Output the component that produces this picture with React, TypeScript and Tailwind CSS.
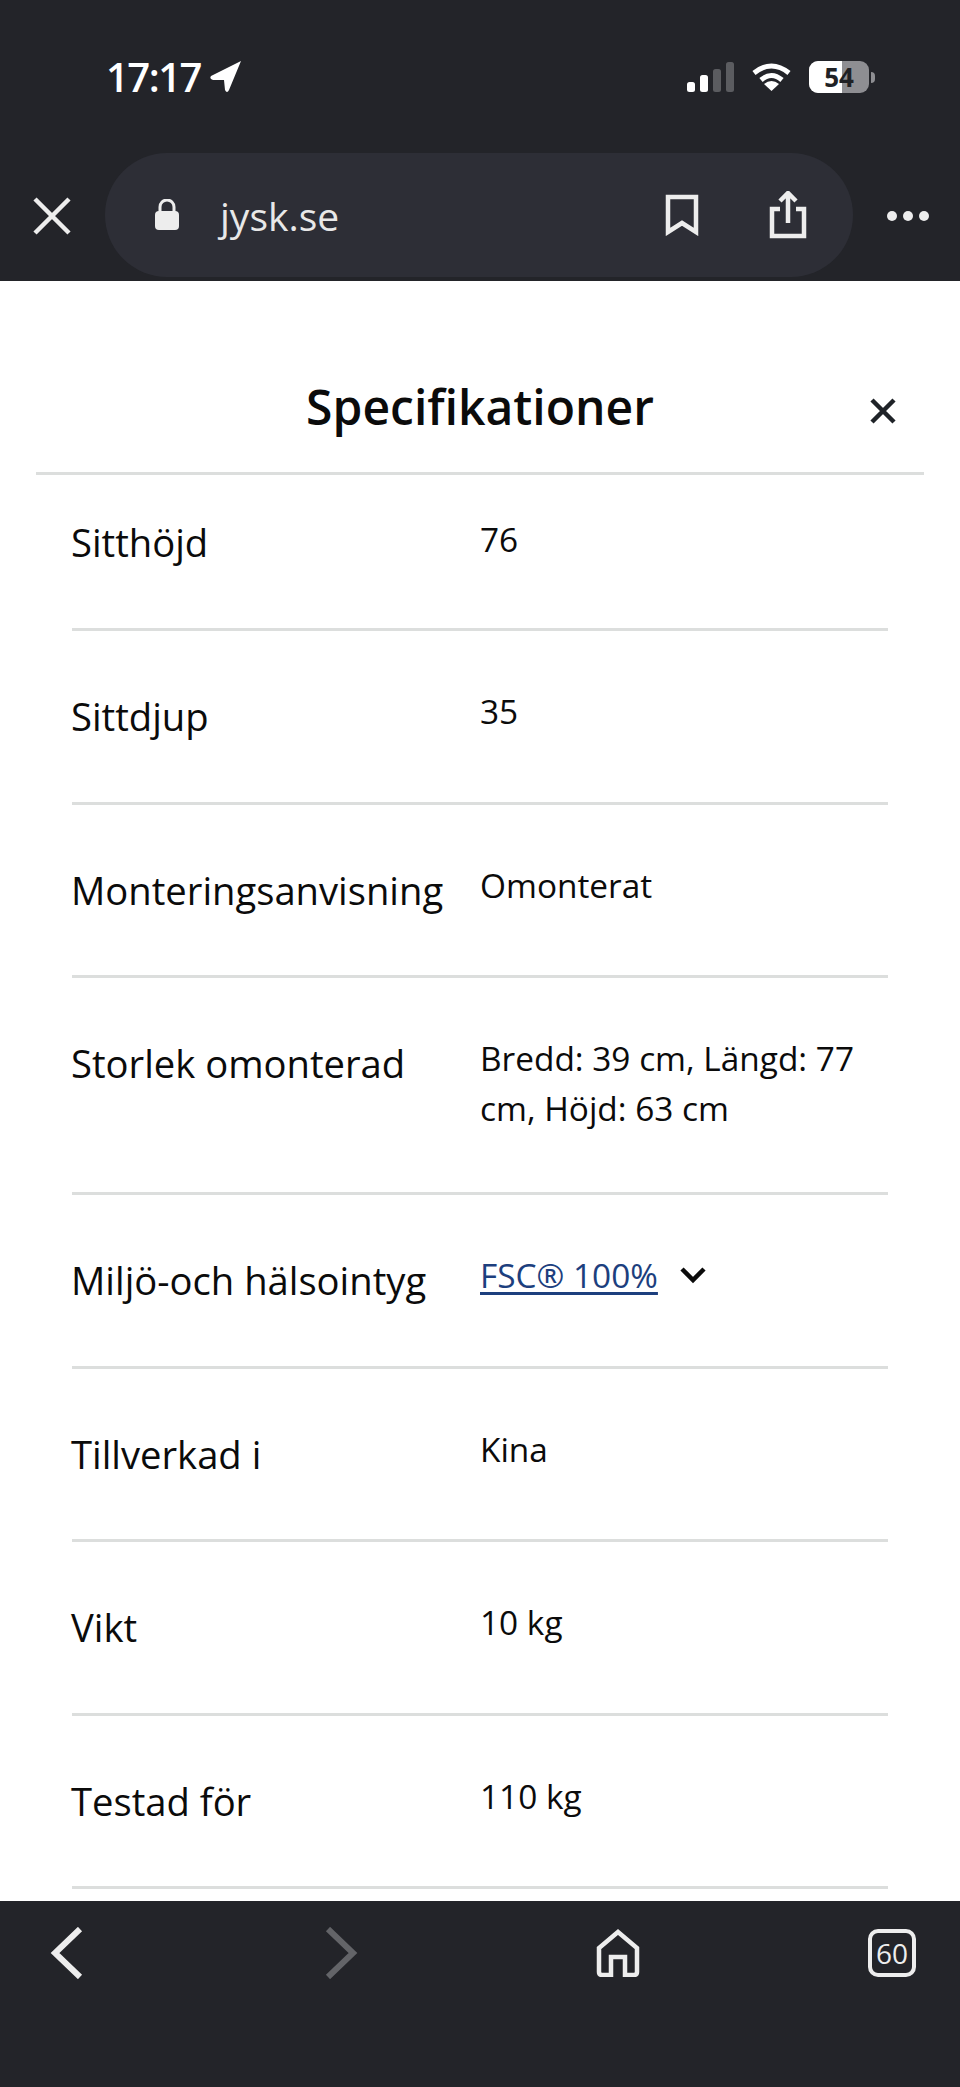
const specs = [
  { label: "Sittdjup", value: "35" },
  { label: "Monteringsanvisning", value: "Omonterat" },
];
const specsAfter = [
  { label: "Tillverkad i", value: "Kina" },
  { label: "Vikt", value: "10 kg" },
  { label: "Testad för", value: "110 kg" },
];

function Row({
  label,
  children,
  className = "h-[173.5px]",
  labelPad = "pt-[61px]",
  valuePad = "pt-[55px]",
}: {
  label: string;
  children: React.ReactNode;
  className?: string;
  labelPad?: string;
  valuePad?: string;
}) {
  return (
    <div className={`flex border-b-[3px] border-[#dcdedd] ${className}`}>
      <div className={`-ml-[1px] w-[409px] shrink-0 text-[38.2px] leading-[48px] text-[#0b0b0b] ${labelPad}`}>{label}</div>
      <div className={`text-[33.4px] leading-[50px] text-[#0b0b0b] ${valuePad}`}>{children}</div>
    </div>
  );
}

function StatusBar() {
  return (
    <div className="flex h-[153px] items-start justify-between pl-[106px] pr-[85px] pt-[53px]">
      <div className="flex items-center gap-[9px]">
        <span className="text-[40px] font-semibold leading-[48px] tracking-[-1.5px] text-white">17:17</span>
        <svg width="32" height="32" viewBox="0 0 32 32" fill="white">
          <path d="M31 0 L1 15 Q-1 18 3 19 L14 19 L15 29 Q17 33 19 29 Z" />
        </svg>
      </div>
      <div className="flex items-center gap-[18px] pt-[8px]">
        <svg width="47" height="30" viewBox="0 0 47 30">
          <rect x="0" y="20" width="8" height="10" rx="2.5" fill="white" />
          <rect x="13" y="13" width="8" height="17" rx="2.5" fill="white" />
          <rect x="26" y="7" width="8" height="23" rx="2.5" fill="#5b5c60" />
          <rect x="39" y="0" width="8" height="30" rx="2.5" fill="#5b5c60" />
        </svg>
        <svg width="39" height="28" viewBox="0 0 39 28" fill="none" stroke="white" strokeWidth="5">
          <path d="M2 10 Q19.5 -4 37 10" />
          <path d="M9 17 Q19.5 8 30 17" />
          <path d="M19.5 28 L12 21 Q19.5 15 27 21 Z" fill="white" stroke="none" />
        </svg>
        <div className="flex items-center">
          <div className="relative flex h-[32px] w-[60px] items-center justify-center rounded-[9px] bg-[#8e8e92]">
            <div className="absolute inset-y-0 left-0 w-[33px] rounded-l-[9px] bg-white" />
            <span className="relative text-[26px] font-bold leading-[32px] text-[#202125]">54</span>
          </div>
          <div className="ml-[2px] h-[11px] w-[4px] rounded-r-full bg-[#8e8e92]" />
        </div>
      </div>
    </div>
  );
}

function UrlBar() {
  return (
    <div className="flex items-start pl-[33px]">
      <svg className="mt-[44px]" width="38" height="38" viewBox="0 0 38 38" stroke="#ededed" strokeWidth="4.5" fill="none">
        <path d="M2 2 L36 36 M36 2 L2 36" />
      </svg>
      <div className="ml-[34px] flex h-[124px] w-[748px] items-center rounded-[62px] bg-[#2d2e36] pl-[49px] pr-[46px]">
        <svg width="26" height="32" viewBox="0 0 26 32" fill="#ededed">
          <path d="M6 13 V8 a7 7 0 0 1 14 0 V13" fill="none" stroke="#ededed" strokeWidth="3" />
          <rect x="1" y="12" width="24" height="19" rx="4" />
        </svg>
        <span className="ml-[40px] text-[39px] leading-none text-[#e8e8e8]">jysk.se</span>
        <svg className="ml-auto" width="34" height="42" viewBox="0 0 34 42" fill="none" stroke="#ededed" strokeWidth="4.5">
          <path d="M3 3 H31 V38 L17 29 L3 38 Z" />
        </svg>
        <svg className="ml-[70px]" width="38" height="48" viewBox="0 0 38 48" fill="none" stroke="#ededed" strokeWidth="4.5">
          <path d="M11 18 H3 V45 H35 V18 H27" />
          <path d="M19 32 V4 M11 10 L19 2 L27 10" />
        </svg>
      </div>
      <div className="ml-[34px] mt-[58px] flex gap-[6px]">
        <div className="size-[10px] rounded-full bg-[#ededed]" />
        <div className="size-[10px] rounded-full bg-[#ededed]" />
        <div className="size-[10px] rounded-full bg-[#ededed]" />
      </div>
    </div>
  );
}

function BottomBar() {
  return (
    <div className="flex h-[186px] items-start bg-[#232429] pl-[50px] pt-[26px]">
      <svg width="34" height="52" viewBox="0 0 34 52" fill="none" stroke="#ededed" strokeWidth="6">
        <path d="M30 2 L5 26 L30 50" />
      </svg>
      <svg className="ml-[240px]" width="34" height="52" viewBox="0 0 34 52" fill="none" stroke="#636468" strokeWidth="6">
        <path d="M4 2 L29 26 L4 50" />
      </svg>
      <svg className="ml-[238px] mt-[2px]" width="44" height="48" viewBox="0 0 44 48" fill="none" stroke="#ededed" strokeWidth="4.5">
        <path d="M22 3 L41 19 V43 Q41 46 38 46 H29 V28 H15 V46 H6 Q3 46 3 43 V19 Z" />
      </svg>
      <div className="ml-[228px] mt-[2px] flex h-[48px] w-[48px] items-center justify-center rounded-[10px] border-[4px] border-[#ededed] text-[28px] leading-none text-[#ededed]">
        60
      </div>
    </div>
  );
}

export default function App() {
  return (
    <div className="flex h-[2087px] w-[960px] flex-col overflow-hidden bg-white font-['Open_Sans',sans-serif]">
      {/* Browser chrome */}
      <div className="h-[281px] shrink-0 bg-[#232429]">
        <StatusBar />
        <UrlBar />
      </div>

      {/* Modal */}
      <div className="flex min-h-0 flex-1 flex-col">
        <div className="relative mx-[36px] flex h-[194px] shrink-0 items-end justify-center border-b-[3px] border-[#dcdedd] pb-[34px]">
          <h1 className="text-[48px] font-semibold leading-[62px] text-[#0b0b0b]">Specifikationer</h1>
          <svg className="absolute right-[27px] top-[116px]" width="28" height="28" viewBox="0 0 28 28" fill="none" stroke="#1f2328" strokeWidth="4.5">
            <path d="M3 3 L25 25 M25 3 L3 25" />
          </svg>
        </div>
        <div className="mx-[72px] flex-1">
          <Row label="Sitthöjd" className="h-[156px]" labelPad="pt-[43px]" valuePad="pt-[39px]">76</Row>
          {specs.map((s) => (
            <Row key={s.label} label={s.label}>{s.value}</Row>
          ))}
          <Row label="Storlek omonterad" className="h-[217px]">
            Bredd: 39 cm, Längd: 77 cm, Höjd: 63 cm
          </Row>
          <Row label="Miljö-och hälsointyg">
            <span className="flex items-center gap-[22px]">
              <span className="text-[#1d3f7e] underline underline-offset-[4px]">FSC® 100%</span>
              <svg width="26" height="18" viewBox="0 0 26 18" fill="none" stroke="#0b0b0b" strokeWidth="4.5">
                <path d="M2 3 L13 14 L24 3" />
              </svg>
            </span>
          </Row>
          {specsAfter.map((s) => (
            <Row key={s.label} label={s.label}>{s.value}</Row>
          ))}
        </div>
      </div>

      <BottomBar />
    </div>
  );
}
